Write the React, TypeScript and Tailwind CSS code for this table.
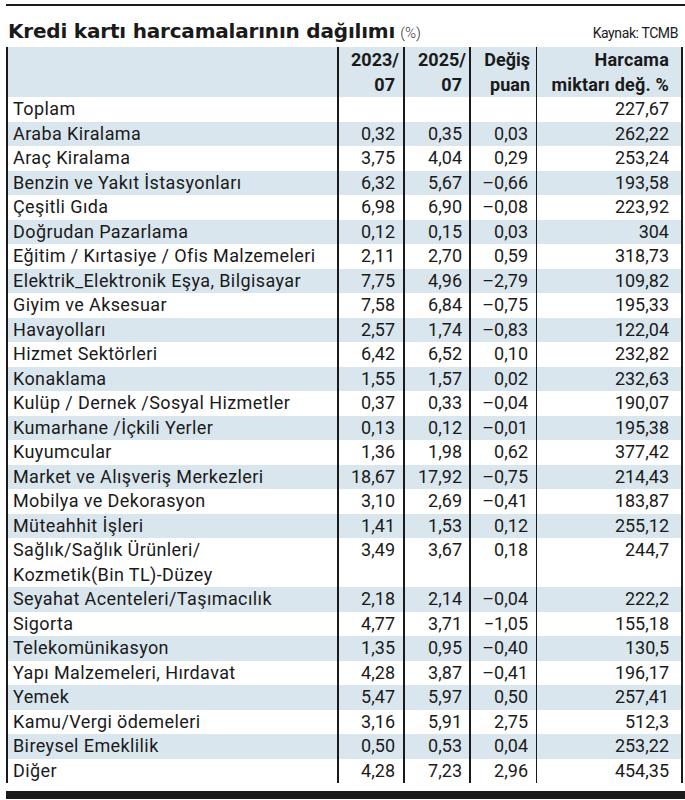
const rows: string[][] = [
  ["Toplam", "", "", "", "227,67"],
  ["Araba Kiralama", "0,32", "0,35", "0,03", "262,22"],
  ["Araç Kiralama", "3,75", "4,04", "0,29", "253,24"],
  ["Benzin ve Yakıt İstasyonları", "6,32", "5,67", "–0,66", "193,58"],
  ["Çeşitli Gıda", "6,98", "6,90", "–0,08", "223,92"],
  ["Doğrudan Pazarlama", "0,12", "0,15", "0,03", "304"],
  ["Eğitim / Kırtasiye / Ofis Malzemeleri", "2,11", "2,70", "0,59", "318,73"],
  ["Elektrik_Elektronik Eşya, Bilgisayar", "7,75", "4,96", "–2,79", "109,82"],
  ["Giyim ve Aksesuar", "7,58", "6,84", "–0,75", "195,33"],
  ["Havayolları", "2,57", "1,74", "–0,83", "122,04"],
  ["Hizmet Sektörleri", "6,42", "6,52", "0,10", "232,82"],
  ["Konaklama", "1,55", "1,57", "0,02", "232,63"],
  ["Kulüp / Dernek /Sosyal Hizmetler", "0,37", "0,33", "–0,04", "190,07"],
  ["Kumarhane /İçkili Yerler", "0,13", "0,12", "–0,01", "195,38"],
  ["Kuyumcular", "1,36", "1,98", "0,62", "377,42"],
  ["Market ve Alışveriş Merkezleri", "18,67", "17,92", "–0,75", "214,43"],
  ["Mobilya ve Dekorasyon", "3,10", "2,69", "–0,41", "183,87"],
  ["Müteahhit İşleri", "1,41", "1,53", "0,12", "255,12"],
  ["Sağlık/Sağlık Ürünleri/\nKozmetik(Bin TL)-Düzey", "3,49", "3,67", "0,18", "244,7"],
  ["Seyahat Acenteleri/Taşımacılık", "2,18", "2,14", "–0,04", "222,2"],
  ["Sigorta", "4,77", "3,71", "−1,05", "155,18"],
  ["Telekomünikasyon", "1,35", "0,95", "–0,40", "130,5"],
  ["Yapı Malzemeleri, Hırdavat", "4,28", "3,87", "–0,41", "196,17"],
  ["Yemek", "5,47", "5,97", "0,50", "257,41"],
  ["Kamu/Vergi ödemeleri", "3,16", "5,91", "2,75", "512,3"],
  ["Bireysel Emeklilik", "0,50", "0,53", "0,04", "253,22"],
  ["Diğer", "4,28", "7,23", "2,96", "454,35"],
];

export default function App() {
  return (
    <div className="w-[685px] h-[800px] bg-white text-[#1a1a1a] overflow-hidden font-['Roboto',sans-serif]">
      {/* top rule */}
      <div className="ml-[6px] mt-[4px] h-[2px] bg-[#1a1a1a]" />

      {/* title */}
      <div className="ml-[8px] mr-[7px] h-[41px] flex items-end justify-between pb-[6px]">
        <div className="flex items-baseline gap-[5px]">
          <span className="font-['DejaVu_Sans',sans-serif] text-[20px] font-bold leading-none tracking-[-0.2px]">
            Kredi kartı harcamalarının dağılımı
          </span>
          <span className="text-[15px] font-light leading-none text-[#333]">(%)</span>
        </div>
        <span className="text-[14px] leading-none tracking-[-0.4px] mb-[1px]">Kaynak: TCMB</span>
      </div>

      {/* table */}
      <div className="ml-[6px] w-[677px] border-x-2 border-[#1a1a1a] text-[18px]">
        <div className="flex bg-[#dae6ee] font-bold leading-[25px] text-right">
          <div className="w-[331px] h-[50px] border-r-2 border-[#1a1a1a]" />
          <div className="w-[66px] border-r-2 border-[#1a1a1a] pr-[4px]">2023/<br /><span className="pr-[4px]">07</span></div>
          <div className="w-[66px] border-r-2 border-[#1a1a1a] pr-[3px]">2025/<br /><span className="pr-[4px]">07</span></div>
          <div className="w-[66px] border-r border-[#1a1a1a] pr-[6px]">Değiş<br />puan</div>
          <div className="flex-1 pr-3 tracking-[0.2px]">Harcama<br />miktarı değ. %</div>
        </div>
        {rows.map((r, i) => (
          <div key={i} className={`flex leading-[24.5px] ${i % 2 === 1 ? "bg-[#dae6ee]" : "bg-white"}`}>
            <div className="w-[331px] border-r-2 border-[#1a1a1a] pl-[5px] whitespace-pre-line tracking-[0.4px]">{r[0]}</div>
            <div className="w-[66px] border-r-2 border-[#1a1a1a] pr-2 text-right">{r[1]}</div>
            <div className="w-[66px] border-r-2 border-[#1a1a1a] pr-[7px] text-right">{r[2]}</div>
            <div className="w-[66px] border-r border-[#1a1a1a] pr-2 text-right">{r[3]}</div>
            <div className="flex-1 pr-3 text-right">{r[4]}</div>
          </div>
        ))}
      </div>

      {/* bottom rule */}
      <div className="ml-[6px] mt-[8px] h-[8px] bg-[#1a1a1a]" />
    </div>
  );
}
